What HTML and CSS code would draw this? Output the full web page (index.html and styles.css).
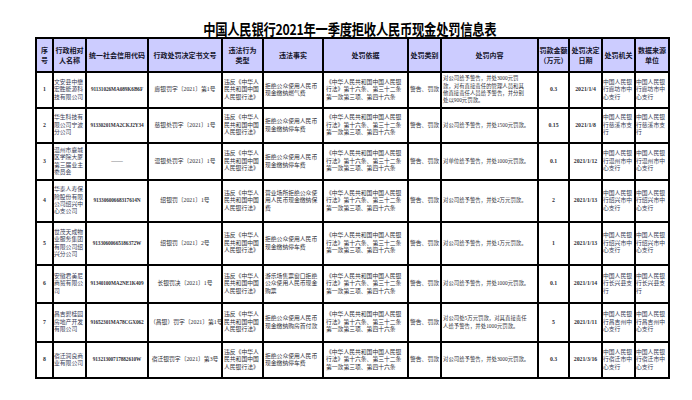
FILE: index.html
```html
<!DOCTYPE html>
<html lang="zh">
<head>
<meta charset="utf-8">
<title>中国人民银行2021年一季度拒收人民币现金处罚信息表</title>
<link rel="stylesheet" href="styles.css">
</head>
<body>
<div class="page">
  <div class="title-wrap"><h1 class="title">中国人民银行2021年一季度拒收人民币现金处罚信息表</h1></div>
  <table class="sheet">
    <colgroup>
      <col class="c-no"><col class="c-name"><col class="c-code"><col class="c-doc"><col class="c-type"><col class="c-fact"><col class="c-basis"><col class="c-kind"><col class="c-content"><col class="c-amt"><col class="c-date"><col class="c-org"><col class="c-src">
    </colgroup>
    <thead>
      <tr class="head">
        <th>序<br>号</th>
        <th>行政相对<br>人名称</th>
        <th>统一社会信用代码</th>
        <th>行政处罚决定书文号</th>
        <th>违法行为<br>类型</th>
        <th>违法事实</th>
        <th>处罚依据</th>
        <th>处罚类别</th>
        <th>处罚内容</th>
        <th>罚款金额<br>（万元）</th>
        <th>处罚决定<br>日期</th>
        <th>处罚机关</th>
        <th>数据来源<br>单位</th>
      </tr>
    </thead>
    <tbody>
      <tr class="r1">
        <td class="ctr num">1</td>
        <td class="name">文安县中懋宏胜能源科技有限公司</td>
        <td class="ctr code">91131026MA089K6B6F</td>
        <td class="ctr doc">廊银罚字〔2021〕第1号</td>
        <td class="type">违反《中华人民共和国中国人民银行法》</td>
        <td class="fact">拒绝公众使用人民币现金缴纳燃气费</td>
        <td class="basis">《中华人民共和国中国人民银行法》第十六条、第三十二条第一款第三项、第四十六条</td>
        <td class="ctr kind">警告、罚款</td>
        <td class="content">对公司给予警告，并处3000元罚<br>款，对有直接责任的管理人员和其<br>他直接责任人员给予警告，并分别<br>处以900元罚款。</td>
        <td class="ctr num">0.3</td>
        <td class="ctr num">2021/1/4</td>
        <td class="org">中国人民银行廊坊市中心支行</td>
        <td class="org">中国人民银行廊坊市中心支行</td>
      </tr>
      <tr class="r2">
        <td class="ctr num">2</td>
        <td class="name">华生科技有限公司宁波分公司</td>
        <td class="ctr code">91330201MA2CKJ2Y34</td>
        <td class="ctr doc">慈银处罚字〔2021〕1号</td>
        <td class="type">违反《中华人民共和国中国人民银行法》</td>
        <td class="fact">拒绝公众使用人民币现金缴纳停车费</td>
        <td class="basis">《中华人民共和国中国人民银行法》第十六条、第三十二条第一款第三项、第四十六条</td>
        <td class="ctr kind">警告、罚款</td>
        <td class="content nw">对公司给予警告，并处1500元罚款。</td>
        <td class="ctr num">0.15</td>
        <td class="ctr num">2021/1/8</td>
        <td class="org">中国人民银行慈溪市支行</td>
        <td class="org">中国人民银行慈溪市支行</td>
      </tr>
      <tr class="r3">
        <td class="ctr num">3</td>
        <td class="name">温州市鹿城区学院大厦第三届业主委员会</td>
        <td class="ctr">——</td>
        <td class="ctr doc">温银处罚字〔2021〕1号</td>
        <td class="type">违反《中华人民共和国中国人民银行法》</td>
        <td class="fact">拒绝公众使用人民币现金缴纳停车费</td>
        <td class="basis">《中华人民共和国中国人民银行法》第十六条、第三十二条第一款第三项、第四十六条</td>
        <td class="ctr kind">警告、罚款</td>
        <td class="content nw">对单位给予警告，并处1000元罚款。</td>
        <td class="ctr num">0.1</td>
        <td class="ctr num">2021/1/12</td>
        <td class="org">中国人民银行温州市中心支行</td>
        <td class="org">中国人民银行温州市中心支行</td>
      </tr>
      <tr class="r4">
        <td class="ctr num">4</td>
        <td class="name">华泰人寿保险股份有限公司绍兴中心支公司</td>
        <td class="ctr code">91330600668317614N</td>
        <td class="ctr doc">绍银罚〔2021〕1号</td>
        <td class="type">违反《中华人民共和国中国人民银行法》</td>
        <td class="fact">营业场所拒绝公众使用人民币现金缴纳保费</td>
        <td class="basis">《中华人民共和国中国人民银行法》第十六条、第三十二条第一款第三项、第四十六条</td>
        <td class="ctr kind">警告、罚款</td>
        <td class="content nw">对公司给予警告，并处2万元罚款。</td>
        <td class="ctr num">2</td>
        <td class="ctr num">2021/1/13</td>
        <td class="org">中国人民银行绍兴市中心支行</td>
        <td class="org">中国人民银行绍兴市中心支行</td>
      </tr>
      <tr class="r5">
        <td class="ctr num">5</td>
        <td class="name">世茂天成物业服务集团有限公司绍兴分公司</td>
        <td class="ctr code">91330600665186372W</td>
        <td class="ctr doc">绍银罚〔2021〕2号</td>
        <td class="type">违反《中华人民共和国中国人民银行法》</td>
        <td class="fact">拒绝公众使用人民币现金缴纳停车费</td>
        <td class="basis">《中华人民共和国中国人民银行法》第十六条、第三十二条第一款第三项、第四十六条</td>
        <td class="ctr kind">警告、罚款</td>
        <td class="content nw">对公司给予警告，并处1万元罚款。</td>
        <td class="ctr num">1</td>
        <td class="ctr num">2021/1/13</td>
        <td class="org">中国人民银行绍兴市中心支行</td>
        <td class="org">中国人民银行绍兴市中心支行</td>
      </tr>
      <tr class="r6">
        <td class="ctr num">6</td>
        <td class="name">安徽君美尼商贸有限公司</td>
        <td class="ctr code">91340100MA2NE1K409</td>
        <td class="ctr doc">长银罚决〔2021〕1号</td>
        <td class="type">违反《中华人民共和国中国人民银行法》</td>
        <td class="fact">游乐场售票窗口拒绝公众使用人民币现金购票</td>
        <td class="basis">《中华人民共和国中国人民银行法》第十六条、第三十二条第一款第三项、第四十六条</td>
        <td class="ctr kind">警告、罚款</td>
        <td class="content nw">对公司给予警告，并处1000元罚款。</td>
        <td class="ctr num">0.1</td>
        <td class="ctr num">2021/1/14</td>
        <td class="org">中国人民银行长兴县支行</td>
        <td class="org">中国人民银行长兴县支行</td>
      </tr>
      <tr class="r7">
        <td class="ctr num">7</td>
        <td class="name">昌吉碧桂园房地产开发有限公司</td>
        <td class="ctr code">91652301MA78CGX062</td>
        <td class="ctr doc">（昌银）罚字〔2021〕第1号</td>
        <td class="type">违反《中华人民共和国中国人民银行法》</td>
        <td class="fact">拒绝公众使用人民币现金缴纳购房首付款</td>
        <td class="basis">《中华人民共和国中国人民银行法》第十六条、第三十二条第一款第三项、第四十六条</td>
        <td class="ctr kind">警告、罚款</td>
        <td class="content">对公司处5万元罚款，对其直接责任<br>人给予警告，并处1000元罚款。</td>
        <td class="ctr num">5</td>
        <td class="ctr num">2021/1/11</td>
        <td class="org">中国人民银行昌吉州中心支行</td>
        <td class="org">中国人民银行昌吉州中心支行</td>
      </tr>
      <tr class="r8">
        <td class="ctr num">8</td>
        <td class="name">宿迁润良商业有限公司</td>
        <td class="ctr code">91321300717882610W</td>
        <td class="ctr doc">宿迁银罚字〔2021〕第3号</td>
        <td class="type">违反《中华人民共和国中国人民银行法》</td>
        <td class="fact">拒绝公众使用人民币现金缴纳停车费</td>
        <td class="basis">《中华人民共和国中国人民银行法》第十六条、第三十二条第一款第三项、第四十六条</td>
        <td class="ctr kind">警告、罚款</td>
        <td class="content nw">对公司给予警告，并处3000元罚款。</td>
        <td class="ctr num">0.3</td>
        <td class="ctr num">2021/3/16</td>
        <td class="org">中国人民银行宿迁市中心支行</td>
        <td class="org">中国人民银行宿迁市中心支行</td>
      </tr>
    </tbody>
  </table>
</div>
</body>
</html>
```
FILE: styles.css
```css
html, body {
  margin: 0;
  padding: 0;
  background: #ffffff;
}

.page {
  width: 692px;
  height: 400px;
  overflow: hidden;
}

.title-wrap {
  height: 37px;
  box-sizing: border-box;
  padding-top: 21px;
  padding-left: 8px;
  text-align: center;
}

.title {
  display: inline-block;
  margin: 0;
  font-family: "Noto Sans CJK SC", "Liberation Sans", sans-serif;
  font-size: 15px;
  line-height: 16px;
  font-weight: 700;
  color: #000;
  letter-spacing: -0.3px;
  transform: scaleX(0.82);
  transform-origin: center;
}

.sheet {
  margin-left: 35px;
  width: 633px;
  table-layout: fixed;
  border-collapse: collapse;
  font-family: "Liberation Serif", "Noto Sans CJK SC", serif;
  font-size: 5.8px;
  line-height: 7.4px;
  color: #2e2e36;
}

.c-no { width: 17px; }
.c-name { width: 33px; }
.c-code { width: 62px; }
.c-doc { width: 74px; }
.c-type { width: 41px; }
.c-fact { width: 60px; }
.c-basis { width: 85px; }
.c-kind { width: 33px; }
.c-content { width: 97px; }
.c-amt { width: 31px; }
.c-date { width: 33px; }
.c-org { width: 33px; }
.c-src { width: 34px; }

.sheet th,
.sheet td {
  border: 2px solid #000;
  padding: 0 1px;
  vertical-align: middle;
  overflow: hidden;
}

.sheet td {
  text-align: left;
  word-break: break-all;
}

.sheet th {
  padding: 0;
  background: #ccccff;
  font-family: "Noto Sans CJK SC", "Liberation Sans", sans-serif;
  font-size: 7px;
  line-height: 10.5px;
  font-weight: 700;
  color: #14142a;
  text-align: center;
}

.head { height: 34px; }
.r1 { height: 36px; }
.r2 { height: 35px; }
.r3 { height: 37px; }
.r4 { height: 42px; }
.r5 { height: 43px; }
.r6 { height: 38px; }
.r7 { height: 39px; }
.r8 { height: 36px; }

.sheet td.ctr { text-align: center; }
.sheet td.nw { white-space: nowrap; }

.sheet td.name,
.sheet td.org {
  padding: 0;
  color: #363a55;
}

.sheet td.basis {
  padding: 0 2px;
}

.sheet td.content {
  font-size: 5.4px;
}

.sheet td.kind {
  padding: 0;
  white-space: nowrap;
}

.num {
  font-weight: 700;
}

.code {
  font-weight: 700;
  font-size: 5.3px;
  letter-spacing: -0.1px;
  white-space: nowrap;
}

.doc {
  white-space: nowrap;
}
```
